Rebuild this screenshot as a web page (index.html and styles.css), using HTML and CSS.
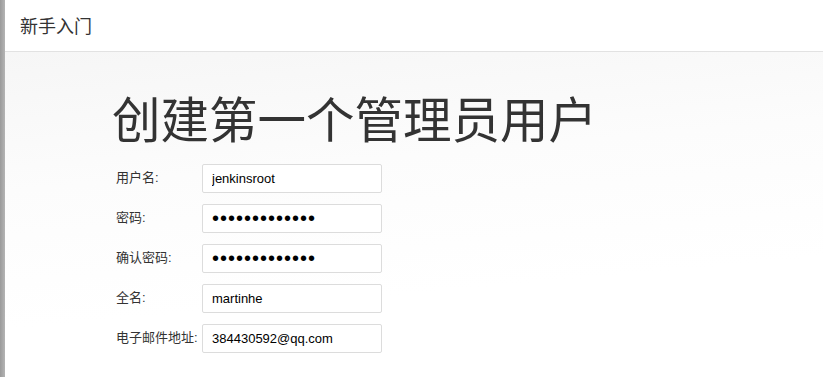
FILE: index.html
```html
<!DOCTYPE html>
<html lang="zh-CN">
<head>
    <meta charset="UTF-8">
    <meta name="viewport" content="width=device-width, initial-scale=1.0">
    <title>新手入门</title>
    <link rel="stylesheet" href="styles.css">
</head>
<body>
    <div class="edge"></div>
    <div class="dialog">
        <div class="header">新手入门</div>
        <div class="content">
            <h1>创建第一个管理员用户</h1>
            <div class="row">
                <label>用户名:</label>
                <input type="text" value="jenkinsroot">
            </div>
            <div class="row">
                <label>密码:</label>
                <input type="password" value="jenkinsroot12">
            </div>
            <div class="row">
                <label>确认密码:</label>
                <input type="password" value="jenkinsroot12">
            </div>
            <div class="row">
                <label>全名:</label>
                <input type="text" value="martinhe">
            </div>
            <div class="row">
                <label>电子邮件地址:</label>
                <input type="text" value="384430592@qq.com">
            </div>
        </div>
    </div>
</body>
</html>
```

FILE: styles.css
```css
html, body {
    margin: 0;
    height: 100%;
}
body {
    display: flex;
    font-family: "Liberation Sans", Arial, "Noto Sans CJK SC", sans-serif;
    color: #333;
    overflow: hidden;
}
.edge {
    width: 5px;
    flex: none;
    background: linear-gradient(to right, #9a9a9a, #b4b4b4);
}
.dialog {
    flex: 1;
    display: flex;
    flex-direction: column;
    background: #fff;
}
.header {
    height: 52px;
    box-sizing: border-box;
    padding: 0 0 1px 15px;
    display: flex;
    align-items: center;
    font-size: 18px;
    color: #333;
    border-bottom: 1px solid #e2e2e2;
}
.content {
    flex: 1;
    padding: 0 0 0 107px;
    background: linear-gradient(175deg, #f6f6f6 0%, #fcfcfc 35%, #fff 70%);
}
h1 {
    margin: 37px 0 11px 0;
    font-size: 48.5px;
    font-weight: normal;
    line-height: 64px;
    color: #333;
}
.row {
    display: flex;
    align-items: flex-start;
    height: 40px;
}
label {
    width: 86px;
    flex: none;
    padding: 3px 0 0 4px;
    font-size: 13px;
    color: #333;
}
input {
    width: 180px;
    height: 29px;
    box-sizing: border-box;
    margin: 0;
    padding: 0 9px;
    border: 1px solid #dcdcdc;
    border-radius: 2px;
    background: #fff;
    font-family: "Liberation Sans", Arial, sans-serif;
    font-size: 13px;
    color: #000;
    outline: none;
}
input[type=password] {
    font-size: 20px;
    letter-spacing: 1px;
}
```
